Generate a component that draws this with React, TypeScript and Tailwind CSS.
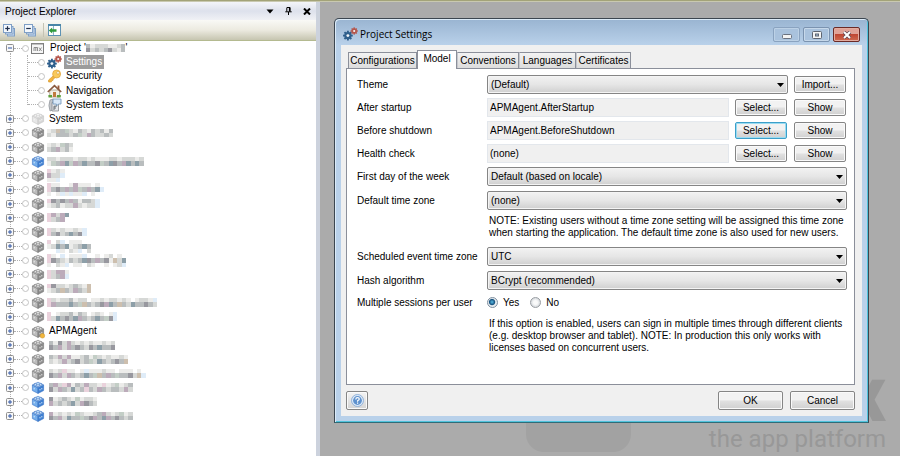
import { useState } from "react";
import type { ReactNode } from "react";

const UI_FONT = "font-['Liberation_Sans',Arial,sans-serif]";
const TITLE_FONT = "font-['Open_Sans','Noto_Sans',sans-serif]";

/* ---------- icons ---------- */

function Gear({ cx, cy, r, color }: { cx: number; cy: number; r: number; color: string }) {
  const teeth = [0, 45, 90, 135];
  return (
    <g>
      {teeth.map((a) => (
        <rect
          key={a}
          x={cx - r * 0.26}
          y={cy - r * 1.35}
          width={r * 0.52}
          height={r * 2.7}
          fill={color}
          transform={`rotate(${a} ${cx} ${cy})`}
        />
      ))}
      <circle cx={cx} cy={cy} r={r} fill={color} />
      <circle cx={cx} cy={cy} r={r * 0.4} fill="#f4f6fa" />
    </g>
  );
}

function GearsIcon() {
  return (
    <svg width="15" height="14" viewBox="0 0 15 14" className="shrink-0" aria-hidden="true">
      <Gear cx={4.9} cy={8.6} r={3.6} color="#2f5f8c" />
      <Gear cx={11.2} cy={4} r={2.7} color="#b5564c" />
    </svg>
  );
}

function KeyIcon() {
  return (
    <svg width="15" height="14" viewBox="0 0 15 14" className="shrink-0" aria-hidden="true">
      <path d="M7 6.2 L1.6 11 L1.6 13 L4.4 13 L4.6 11.6 L6 11.4 L6.2 10 L8.6 8.4 Z" fill="#f3b340" stroke="#d9992c" strokeWidth=".7" />
      <circle cx="9.6" cy="5" r="4" fill="#f9c95c" stroke="#dc9f38" strokeWidth=".7" />
      <circle cx="11" cy="3.8" r="1.3" fill="#fff" stroke="#c98a1c" strokeWidth=".5" />
    </svg>
  );
}

function HomeIcon() {
  return (
    <svg width="15" height="14" viewBox="0 0 15 14" className="shrink-0" aria-hidden="true">
      <rect x="2.8" y="6" width="9.6" height="7" fill="#f1efe6" stroke="#9a9078" strokeWidth=".7" />
      <rect x="10.6" y="1.5" width="1.8" height="4" fill="#9c5a3c" />
      <path d="M.8 8 L7.5 1.6 L14.2 8" fill="none" stroke="#8a5a40" strokeWidth="1.7" />
      <rect x="6" y="8" width="3" height="5" fill="#c07a3f" />
      <rect x="1.4" y="11" width="3.6" height="2.4" fill="#5ea13c" />
      <rect x="10" y="11" width="3.8" height="2.4" fill="#5ea13c" />
    </svg>
  );
}

function TextsIcon() {
  return (
    <svg width="15" height="14" viewBox="0 0 15 14" className="shrink-0" aria-hidden="true">
      <path d="M3 2 L6 1 V12 L3 13 Q.8 7.5 3 2 Z" fill="#c3c6ca" stroke="#8f9499" strokeWidth=".7" />
      <path d="M5 4.5 h6.5 v8.5 h-6.5 Z" fill="#e4e6e9" stroke="#85898e" strokeWidth=".8" />
      <path d="M6 1 h8 v5 h-2.6 l-2 2.2 v-2.2 H6 Z" fill="#d9e8f7" stroke="#6d93b8" strokeWidth=".8" />
      <path d="M7 12 V8.2 H9.6 M7 10 H9" fill="none" stroke="#6b7075" strokeWidth="1" />
    </svg>
  );
}

function ProjectIcon() {
  return (
    <svg width="13" height="11" viewBox="0 0 13 11" className="shrink-0" aria-hidden="true">
      <rect x=".5" y=".5" width="12" height="10" fill="#f6f6f6" stroke="#7d7d7d" />
      <path d="M.5 1 h12" stroke="#8c8c8c" strokeWidth="1" />
      <path d="M3 8 V4.5 H6.5 V8 M4.8 4.5 V8" stroke="#777" strokeWidth=".8" fill="none" />
      <path d="M8 4.5 L10.6 8 M10.6 4.5 L8 8" stroke="#777" strokeWidth=".8" />
    </svg>
  );
}

type CubeTone = "grey" | "blue" | "pale";

const CUBE_COLORS: Record<CubeTone, [string, string, string, string]> = {
  grey: ["#e2e2e2", "#bcbcbc", "#8c8c8c", "#767676"],
  blue: ["#bcdcfa", "#74aeec", "#3f80d2", "#3a74c4"],
  pale: ["#f4f4f4", "#e6e6e6", "#d6d6d6", "#c6c6c6"],
};

function CubeIcon({ tone, badge }: { tone: CubeTone; badge?: boolean }) {
  const [top, left, right, line] = CUBE_COLORS[tone];
  return (
    <svg width="13" height="13" viewBox="0 0 13 13" className="shrink-0 overflow-visible" aria-hidden="true">
      <path d="M.4 4 L6 6.6 V12.4 L.4 9.6 Z" fill={left} stroke={line} strokeWidth=".6" />
      <path d="M11.6 4 L6 6.6 V12.4 L11.6 9.6 Z" fill={right} stroke={line} strokeWidth=".6" />
      <path d="M.4 4 L6 1.2 L11.6 4 L6 6.6 Z" fill={top} stroke={line} strokeWidth=".6" />
      <path d="M2 3.8 V2.8 Q3.3 1.8 4.6 2.8 V3.8 Q3.3 4.8 2 3.8 Z" fill="#fff" fillOpacity=".55" stroke={line} strokeWidth=".6" />
      <path d="M7.4 3.8 V2.8 Q8.7 1.8 10 2.8 V3.8 Q8.7 4.8 7.4 3.8 Z" fill="#fff" fillOpacity=".55" stroke={line} strokeWidth=".6" />
      <path d="M4.7 5.2 V4.2 Q6 3.2 7.3 4.2 V5.2 Q6 6.2 4.7 5.2 Z" fill="#fff" fillOpacity=".7" stroke={line} strokeWidth=".6" />
      <path d="M2.2 6.8 V8.4 M8 8 V9.4 M9.8 7 V8.4" stroke="#fff" strokeOpacity=".8" strokeWidth=".9" />
      {badge && <circle cx="10.4" cy="10.8" r="2.3" fill="#f2b63c" stroke="#c98f1f" strokeWidth=".5" />}
    </svg>
  );
}

function StackIcon({ sign }: { sign: "plus" | "minus" }) {
  return (
    <svg width="13" height="13" viewBox="0 0 13 13" aria-hidden="true">
      <rect x="4.5" y="4.5" width="7" height="7.5" fill="#c9daee" stroke="#7f9fc6" />
      <rect x="2.5" y="2.5" width="7.5" height="7.5" fill="#dde8f5" stroke="#7f9fc6" />
      <rect x=".5" y=".5" width="8" height="8" fill="#f3f8fd" stroke="#7f9fc6" />
      <path d="M2.2 4.5 h4.6" stroke="#20304a" strokeWidth="1.2" />
      {sign === "plus" && <path d="M4.5 2.2 v4.6" stroke="#20304a" strokeWidth="1.2" />}
    </svg>
  );
}

function LocateIcon() {
  return (
    <svg width="13" height="12" viewBox="0 0 13 12" aria-hidden="true">
      <rect x=".5" y=".5" width="12" height="11" fill="#fff" stroke="#5d92b4" />
      <path d="M0 1 h13" stroke="#4a86a8" strokeWidth="2" />
      <path d="M5.5 2 v9" stroke="#8fb2ca" />
      <path d="M.8 6.5 L4.2 3.4 V5.3 H8.5 V7.7 H4.2 V9.6 Z" fill="#2f9a3c" />
    </svg>
  );
}

/* ---------- obscured names ---------- */

const SWATCHES: Record<string, string> = {
  a: "#ececea",
  b: "#d6d8d6",
  c: "#b9bdbe",
  d: "#98989f",
  p: "#ead2dc",
  v: "#bcabba",
  l: "#dfecf8",
  g: "#c3cec6",
  t: "#cdbfae",
  s: "#8d9fa8",
};

function Mosaic({ rows }: { rows: string[] }) {
  const cell = 4.4;
  const cols = Math.max(...rows.map((r) => r.length));
  return (
    <svg width={cols * cell} height={rows.length * cell} className="shrink-0" shapeRendering="crispEdges" aria-hidden="true">
      {rows.flatMap((row, y) =>
        row.split("").map((ch, x) =>
          SWATCHES[ch] ? (
            <rect key={`${x}-${y}`} x={x * cell} y={y * cell} width={cell} height={cell} fill={SWATCHES[ch]} />
          ) : null,
        ),
      )}
    </svg>
  );
}

/* ---------- project tree ---------- */

function Expander({ open }: { open?: boolean }) {
  return (
    <svg width="8" height="8" viewBox="0 0 8 8" className="relative shrink-0" aria-hidden="true">
      <rect x=".5" y=".5" width="7" height="7" rx="1" fill="#f8f8f8" stroke="#8e8e8e" />
      <path d="M2 4 h4" stroke="#2f55a4" />
      {!open && <path d="M4 2 v4" stroke="#2f55a4" />}
    </svg>
  );
}

function Dot() {
  return <span className="size-[7px] shrink-0 rounded-full border border-[#c4c4c4] bg-white" />;
}

interface ModuleRow {
  name?: string;
  mask?: string[];
  tone: CubeTone;
  badge?: boolean;
  inset?: boolean;
}

const MODULES: ModuleRow[] = [
  { name: "System", tone: "pale" },
  { mask: ["abtcgbacbacbcac", "bacccbcgbvcbbcb"], tone: "grey" },
  { mask: ["abagcb", "bcvbca"], tone: "grey" },
  { mask: ["bbabbbabbabaaabbabbbab", "agcvsgvcsccdgcsdcvscsc"], tone: "blue" },
  { mask: ["paba", "vbbl", "aal."], tone: "grey" },
  { mask: ["paa..avaaa.a.", "pcdcvcvgcvcsl", "a.alalaal.a.."], tone: "grey" },
  { mask: ["pdcdcvcaccbl", "abcabbvbabbl"], tone: "grey" },
  { mask: ["pvbvs", "pbcv."], tone: "grey" },
  { mask: ["pbabaabal", "pcdbcscdl"], tone: "grey" },
  { mask: ["p.bl.aaa..", "abscsabcsc", "..la.bal.b"], tone: "grey" },
  { mask: ["pa.l.aaal..a.ab.a.", "pdcbacbcsdcvcdatbs", "a.bal.aa.ba..a.abl"], tone: "grey" },
  { mask: ["pbvva", "pbcvl"], tone: "grey" },
  { mask: ["pdbbabcbat", "abctcbvcbt"], tone: "grey" },
  { mask: ["pbabbcabb.aababbaba.abbal", "pvcccscgtcbcdvsctcbsccdcb"], tone: "grey" },
  { mask: ["p.abbcacb.aba.al", "pbscdcsvcbcscgdl"], tone: "grey" },
  { name: "APMAgent", tone: "grey", badge: true },
  { mask: ["cadbvbababaabab", "dcvbvcdcbdcsccd"], tone: "grey", inset: true },
  { mask: ["cbvbvaabcagbabaaba", "babvbcdbcgbscbcdct"], tone: "grey", inset: true },
  { mask: ["babpaa.alaaabaa.aaa.a.", "dcvbvcbcscgtcvcgccdbtl"], tone: "grey", inset: true },
  { mask: ["cvbpvacbvbbapabgabc", "dbvcbsbcpcbvcbccbvb"], tone: "blue", inset: true },
  { mask: ["dabcbagabba", "vbcbcsbvdcb"], tone: "blue", inset: true },
  { mask: ["vababagbaabcvbabgab", "dcvbsccgcdvcsvcdcbc"], tone: "blue", inset: true },
];

interface ChildRow {
  name: string;
  icon: ReactNode;
}

const CHILDREN: ChildRow[] = [
  { name: "Settings", icon: <GearsIcon /> },
  { name: "Security", icon: <KeyIcon /> },
  { name: "Navigation", icon: <HomeIcon /> },
  { name: "System texts", icon: <TextsIcon /> },
];

function Tree() {
  const [selected, setSelected] = useState("Settings");
  return (
    <ul className="relative grid h-[382px] auto-rows-fr text-[10px] leading-[14px] text-black">
      <span className="absolute top-[12px] bottom-[8px] left-[10px] border-l border-dotted border-[#b0b0b0]" />
      <span className="absolute top-[14px] left-[27px] h-[50px] border-l border-dotted border-[#b0b0b0]" />
      <li className="flex items-center pl-[6px]">
        <Expander open />
        <span className="w-2 border-t border-dotted border-[#b0b0b0]" />
        <Dot />
        <span className="flex items-center pl-[2px]">
          <ProjectIcon />
        </span>
        <span className="flex items-center pl-[6px] whitespace-nowrap">
          Project &apos;
          <Mosaic rows={["cabbbaabc", "dbcbcdbac"]} />
          &apos;
        </span>
      </li>
      {CHILDREN.map((c) => (
        <li key={c.name} className="flex items-center pl-[28px]">
          <span className="w-[10px] border-t border-dotted border-[#b0b0b0]" />
          <Dot />
          <span className="flex pl-[2px]">{c.icon}</span>
          <button
            type="button"
            onClick={() => setSelected(c.name)}
            className={
              selected === c.name
                ? "ml-[2px] h-[14px] bg-[#9c9c9c] px-[2px] leading-[14px] text-white"
                : "ml-[2px] h-[14px] px-[2px] leading-[14px]"
            }
          >
            {c.name}
          </button>
        </li>
      ))}
      {MODULES.map((m, i) => (
        <li key={i} className="flex items-center pl-[6px]">
          <Expander />
          <span className="w-2 border-t border-dotted border-[#b0b0b0]" />
          <Dot />
          <span className="flex pl-[3px]">
            <CubeIcon tone={m.tone} badge={m.badge} />
          </span>
          {m.name ? (
            <span className="pl-[4px]">{m.name}</span>
          ) : (
            <span className={m.inset ? "pl-[4px]" : "pl-[2px]"}>
              <Mosaic rows={m.mask ?? []} />
            </span>
          )}
        </li>
      ))}
    </ul>
  );
}

function Explorer() {
  return (
    <aside className="flex w-[316px] shrink-0 flex-col bg-white">
      <header className="flex h-[18px] items-center justify-between bg-linear-to-b from-[#f4f5f9] via-[#dde1ec] to-[#f0f1f5] pr-[5px] pl-[5px]">
        <h2 className="text-[10px] text-black">Project Explorer</h2>
        <div className="flex items-center gap-[9px]">
          <button type="button" aria-label="Window position" className="flex size-[10px] items-center justify-center">
            <svg width="8" height="5" viewBox="0 0 8 5"><path d="M.5 .5 h7 L4 4.5 Z" fill="#000" /></svg>
          </button>
          <button type="button" aria-label="Auto hide" className="flex size-[9px] items-center justify-center">
            <svg width="7" height="8" viewBox="0 0 7 8">
              <path d="M2 .5 h3 v4 M1.8 .5 V4.5 M.3 4.8 h6.4 M3.5 5 V8" fill="none" stroke="#000" />
              <path d="M4.6 .5 v4" stroke="#000" strokeWidth="1.4" />
            </svg>
          </button>
          <button type="button" aria-label="Close" className="flex size-[9px] items-center justify-center">
            <svg width="8" height="7" viewBox="0 0 8 7"><path d="M1 .5 L7 6.5 M7 .5 L1 6.5" stroke="#000" strokeWidth="2" /></svg>
          </button>
        </div>
      </header>
      <div className="flex h-[21px] items-center border-b border-[#b4ba90] bg-linear-to-b from-[#f9f9f6] via-[#eceae0] to-[#c6c5b0] pl-[3px]">
        <button type="button" aria-label="Expand all"><StackIcon sign="plus" /></button>
        <button type="button" aria-label="Collapse all" className="ml-2"><StackIcon sign="minus" /></button>
        <span className="mr-1 ml-[6px] h-[14px] border-l border-[#c4c3b4]" />
        <button type="button" aria-label="Locate in tree"><LocateIcon /></button>
      </div>
      <Tree />
    </aside>
  );
}

/* ---------- dialog ---------- */

function PushButton({ children, wide, focused }: { children: ReactNode; wide?: boolean; focused?: boolean }) {
  return (
    <button
      type="button"
      className={`${wide ? "h-[19px] w-[65px]" : "h-[17px] w-[52px]"} ${
        focused ? "border-[#3c9fc9] shadow-[inset_0_0_0_1px_#9adcf2]" : "border-[#858585] shadow-[inset_0_0_0_1px_#fafafa]"
      } shrink-0 rounded-[2px] border bg-linear-to-b from-[#f2f2f2] from-45% via-[#e0e0e0] via-55% to-[#d0d0d0] text-[10px] leading-[14px]`}
    >
      {children}
    </button>
  );
}

function Combo({ id, value }: { id: string; value: string }) {
  return (
    <div className="relative min-w-0 flex-1">
      <select
        id={id}
        className="block h-[19px] w-full appearance-none rounded-[2px] border border-[#858585] bg-linear-to-b from-[#f2f2f2] via-[#e6e6e6] to-[#cfcfcf] pl-[3px] text-[10px] leading-[16px] text-black shadow-[inset_0_0_0_1px_#f4f4f4]"
      >
        <option>{value}</option>
      </select>
      <svg width="7" height="4" viewBox="0 0 7 4" className="pointer-events-none absolute top-[8px] right-[4px]" aria-hidden="true">
        <path d="M0 0 h7 L3.5 4 Z" fill="#000" />
      </svg>
    </div>
  );
}

function Row({ label, id, children }: { label: string; id: string; children: ReactNode }) {
  return (
    <div className="flex h-[19px] items-center">
      <label htmlFor={id} className="w-[130px] shrink-0 leading-[14px]">
        {label}
      </label>
      {children}
    </div>
  );
}

function MicroflowRow({ label, id, value, focused }: { label: string; id: string; value: string; focused?: boolean }) {
  return (
    <Row label={label} id={id}>
      <input
        id={id}
        readOnly
        defaultValue={value}
        className="h-[19px] min-w-0 flex-1 border border-[#e3e7ec] bg-[#f0f0f0] pl-[2px] text-[10px] leading-[16px] outline-none"
      />
      <div className="flex gap-[7px] pr-px pl-[6px]">
        <PushButton focused={focused}>Select...</PushButton>
        <PushButton>Show</PushButton>
      </div>
    </Row>
  );
}

const TABS = [
  { name: "Configurations", width: "w-[69px]" },
  { name: "Model", width: "w-[40px]" },
  { name: "Conventions", width: "w-[62px]" },
  { name: "Languages", width: "w-[57px]" },
  { name: "Certificates", width: "w-[55px]" },
];

function Radio({ label, checked, onChange }: { label: string; checked: boolean; onChange: () => void }) {
  return (
    <label className="flex items-center gap-[5px]">
      <input
        type="radio"
        name="sessions"
        checked={checked}
        onChange={onChange}
        className="size-[11px] appearance-none rounded-full border border-[#9a9ea3] bg-[radial-gradient(circle,#fafafa_30%,#d4d8dc_75%)] checked:border-[#7f8f9f] checked:bg-[radial-gradient(circle_at_45%_45%,#58bde6_0%,#17527f_38%,#e6ecf0_52%)]"
      />
      {label}
    </label>
  );
}

function SettingsDialog() {
  const [multi, setMulti] = useState(true);
  return (
    <section
      role="dialog"
      aria-label="Project Settings"
      className="relative rounded-t-[5px] border border-[#3c4650] border-b-[#2f6c78] bg-[#b9d1ea] bg-linear-to-b from-[#99b4d1] to-[#b9d1ea] to-[26px] px-[6px] pb-[6px] shadow-[inset_1px_1px_0_#dcebf8,inset_-1px_-1px_0_#4fc3dc]"
    >
      <header className="flex h-[26px] items-start justify-between">
        <div className="flex items-center gap-[2px] pt-[7px] pl-[2px]">
          <GearsIcon />
          <h1 className={`text-[10px] leading-[16px] text-black ${TITLE_FONT}`}>Project Settings</h1>
        </div>
        <div className="flex gap-[3px] pt-[8px] pr-[2px]">
          <button type="button" aria-label="Minimize" className="flex h-[15px] w-[27px] items-center justify-center rounded-[2px] border border-[#8aa3c0] bg-[#a9c2dd] shadow-[inset_0_0_0_1px_#bcd1e6]">
            <svg width="10" height="5" viewBox="0 0 10 5" className="mt-[3px]"><rect x=".5" y=".5" width="9" height="4" rx="1" fill="#f4f4f4" stroke="#6a7280" /></svg>
          </button>
          <button type="button" aria-label="Maximize" className="flex h-[15px] w-[27px] items-center justify-center rounded-[2px] border border-[#7b93b0] bg-[#a9c2dd] shadow-[inset_0_0_0_1px_#c6d8ea]">
            <svg width="10" height="8" viewBox="0 0 10 8">
              <rect x=".5" y=".5" width="9" height="7" rx="1" fill="#f4f4f4" stroke="#5d6470" />
              <rect x="3.5" y="3" width="3" height="2" fill="#a9c2dd" stroke="#5d6470" />
            </svg>
          </button>
          <button type="button" aria-label="Close" className="flex h-[15px] w-[27px] items-center justify-center rounded-[2px] border border-[#6b2a26] bg-linear-to-b from-[#e0a297] from-45% via-[#bf4734] via-50% to-[#cf6a50] shadow-[inset_0_0_0_1px_#e3aca0]">
            <svg width="10" height="8" viewBox="0 0 10 8">
              <path d="M2 1 L8 7 M8 1 L2 7" stroke="#5a4550" strokeWidth="3.4" />
              <path d="M2 1 L8 7 M8 1 L2 7" stroke="#fff" strokeWidth="2" />
            </svg>
          </button>
        </div>
      </header>

      <div className="bg-[#f0f0f0] pt-[5px] pr-[7px] pb-[6px] pl-[5px] text-[10px] text-black">
        <div role="tablist" className="flex h-[18px] items-end pl-[2px]">
          {TABS.map((t) =>
            t.name === "Model" ? (
              <button
                key={t.name}
                type="button"
                role="tab"
                aria-selected="true"
                className={`relative -mb-px h-[19px] border border-b-0 border-[#8b8f9a] bg-white pb-[3px] leading-[14px] ${t.width}`}
              >
                {t.name}
              </button>
            ) : (
              <button
                key={t.name}
                type="button"
                role="tab"
                aria-selected="false"
                className={`flex h-[16px] items-center justify-center border border-b-0 border-l-[#c5c7cc] border-[#8b8f9a] bg-linear-to-b from-[#f3f3f3] to-[#dcdcdc] leading-[14px] whitespace-nowrap first:border-l-[#8b8f9a] ${t.width}`}
              >
                {t.name}
              </button>
            ),
          )}
        </div>

        <div role="tabpanel" className="h-[317px] border border-[#8b8f9a] bg-white pt-[6px] pr-[7px] pl-[10px]">
          <div className="flex flex-col gap-[4px]">
            <Row label="Theme" id="theme">
              <Combo id="theme" value="(Default)" />
              <div className="flex pr-px pl-[6px]">
                <PushButton>Import...</PushButton>
              </div>
            </Row>
            <MicroflowRow label="After startup" id="after" value="APMAgent.AfterStartup" />
            <MicroflowRow label="Before shutdown" id="before" value="APMAgent.BeforeShutdown" focused />
            <MicroflowRow label="Health check" id="health" value="(none)" />
          </div>
          <div className="mt-[4px] flex flex-col gap-[5px]">
            <Row label="First day of the week" id="firstday">
              <Combo id="firstday" value="Default (based on locale)" />
            </Row>
            <Row label="Default time zone" id="tz">
              <Combo id="tz" value="(none)" />
            </Row>
          </div>
          <p className="mt-[5px] pl-[132px] leading-[12px] whitespace-nowrap">
            NOTE: Existing users without a time zone setting will be assigned this time zone
            <br />
            when starting the application. The default time zone is also used for new users.
          </p>
          <div className="mt-[8px] flex flex-col gap-[5px]">
            <Row label="Scheduled event time zone" id="eventtz">
              <Combo id="eventtz" value="UTC" />
            </Row>
            <Row label="Hash algorithm" id="hash">
              <Combo id="hash" value="BCrypt (recommended)" />
            </Row>
            <fieldset className="flex h-[19px] items-center">
              <legend className="float-left w-[130px] leading-[14px]">Multiple sessions per user</legend>
              <div className="flex gap-[11px]">
                <Radio label="Yes" checked={multi} onChange={() => setMulti(true)} />
                <Radio label="No" checked={!multi} onChange={() => setMulti(false)} />
              </div>
            </fieldset>
          </div>
          <p className="mt-[4px] pl-[132px] leading-[12px] whitespace-nowrap">
            If this option is enabled, users can sign in multiple times through different clients
            <br />
            (e.g. desktop browser and tablet). NOTE: In production this only works with
            <br />
            licenses based on concurrent users.
          </p>
        </div>

        <footer className="flex items-center justify-between pt-[6px]">
          <button
            type="button"
            aria-label="Help"
            className="flex h-[19px] w-[22px] items-center justify-center rounded-[2px] border border-[#858585] bg-linear-to-b from-[#f4f4f4] to-[#d4d4d4] shadow-[inset_0_0_0_1px_#fafafa]"
          >
            <svg width="13" height="13" viewBox="0 0 13 13">
              <circle cx="6.5" cy="6.5" r="6" fill="#dce9f7" stroke="#7fa6d4" strokeWidth=".8" />
              <circle cx="6.5" cy="6.5" r="4.4" fill="#5f92ce" />
              <path d="M4.8 5.4 Q4.8 3.6 6.5 3.6 Q8.3 3.6 8.3 5.1 Q8.3 6.1 6.6 6.8 V7.8 M6.6 8.6 V9.8" fill="none" stroke="#fff" strokeWidth="1.2" />
            </svg>
          </button>
          <div className="flex gap-[7px]">
            <PushButton wide>OK</PushButton>
            <PushButton wide>Cancel</PushButton>
          </div>
        </footer>
      </div>
    </section>
  );
}

function Watermark() {
  return (
    <div className="absolute right-[14px] bottom-0 flex w-[360px] flex-col items-end font-['Roboto',sans-serif] text-[#989898] select-none" aria-hidden="true">
      <div className="absolute bottom-[4px] left-0 size-[105px] rounded-[18px] bg-[#a2a2a2]" />
      <div className="relative text-[78px] leading-[54px] font-black">x</div>
      <div className="relative text-[24px] leading-[34px] whitespace-nowrap">the app platform</div>
    </div>
  );
}

export default function App() {
  return (
    <div className={`flex min-h-screen flex-col bg-[#ababab] ${UI_FONT}`}>
      <div className="h-[2px] shrink-0 border-t border-[#a3a378] bg-[#c9c9b0]" />
      <div className="flex flex-1">
        <Explorer />
        <div className="w-1 shrink-0 bg-[#ccd2dd]" />
        <main className="relative min-w-0 flex-1 overflow-hidden pt-[16px] pr-[31px] pl-[14px]">
          <Watermark />
          <SettingsDialog />
        </main>
      </div>
    </div>
  );
}
